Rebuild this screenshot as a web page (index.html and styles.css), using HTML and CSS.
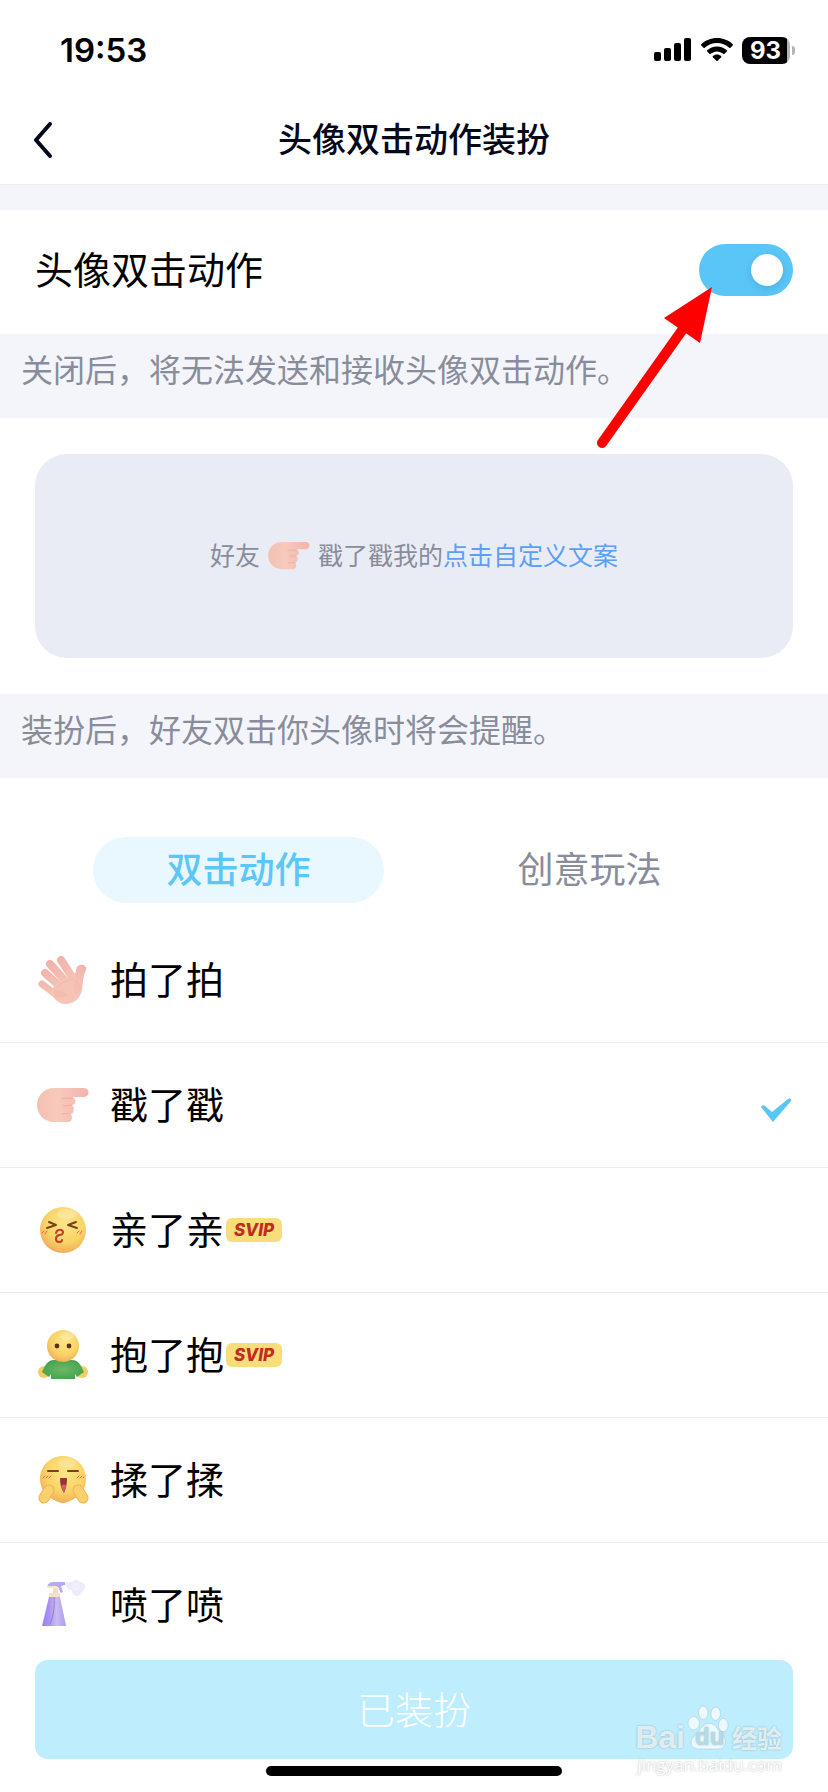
FILE: index.html
```html
<!DOCTYPE html>
<html lang="zh-CN">
    <head>
        <meta charset="utf-8">
        <meta name="viewport" content="width=device-width, initial-scale=1">
        <title>头像双击动作装扮</title>
        <link rel="stylesheet" href="styles.css">
    </head>
    <body>

<div class="statusbar">
  <span class="time">19:53</span>
  <div class="status-icons">
    <svg width="38" height="24" viewBox="0 0 38 24">
      <rect x="0" y="14" width="7" height="9" rx="2"/>
      <rect x="10" y="10" width="7" height="13" rx="2"/>
      <rect x="20" y="5" width="7" height="18" rx="2"/>
      <rect x="30" y="0" width="7" height="23" rx="2"/>
    </svg>
    <svg width="32" height="24" viewBox="0 0 32 24">
      <path d="M16 0C9.900 0 4.300 2.300.300 6.200c-.4.400-.4.900 0 1.300l2.200 2.200c.4.400.9.400 1.300 0C7 6.700 11.300 4.900 16 4.900s9 1.800 12.200 4.800c.4.400.9.400 1.300 0l2.200-2.200c.4-.4.400-.9 0-1.300C27.700 2.300 22.100 0 16 0z"/>
      <path d="M16 8.500c-3.800 0-7.200 1.400-9.800 3.800-.4.400-.4.900 0 1.300l2.200 2.200c.4.400.9.400 1.300 0 1.700-1.500 3.900-2.400 6.300-2.400s4.600.9 6.300 2.400c.4.400.9.400 1.300 0l2.200-2.200c.4-.4.400-.9 0-1.300-2.600-2.400-6-3.800-9.800-3.800z"/>
      <path d="M16 16.500c-1.600 0-3 .6-4.100 1.500-.4.400-.4.900 0 1.300l3.500 3.500c.3.300.8.300 1.200 0l3.500-3.500c.4-.4.400-.9 0-1.300-1.100-.9-2.500-1.500-4.100-1.500z"/>
    </svg>
    <span class="battery">93</span>
  </div>
</div>

<header class="navbar">
  <button class="back" aria-label="返回">
    <svg width="20" height="36" viewBox="0 0 20 36"><path d="M18 2 4 18l14 16" fill="none" stroke="#03081a" stroke-width="4" stroke-linecap="round" stroke-linejoin="round"/></svg>
  </button>
  <h1>头像双击动作装扮</h1>
</header>

<main>
  <div class="setting">
    <label for="double-tap">头像双击动作</label>
    <input type="checkbox" id="double-tap" class="switch" checked>
    <svg class="arrow" width="120" height="166" viewBox="0 0 120 166">
      <path d="M6 156 87 42" stroke="#f00" stroke-width="10" stroke-linecap="round"/>
      <path d="M116 0 68 31l36 25z" fill="#f00"/>
    </svg>
  </div>
  <p class="hint">关闭后，将无法发送和接收头像双击动作。</p>

  <div class="preview">
    <p class="card">
      <span>好友</span>
      <svg width="42" height="28" viewBox="0 0 52 35"><use href="#poke"/></svg>
      <span>戳了戳我的<a href="#">点击自定义文案</a></span>
    </p>
  </div>
  <p class="hint">装扮后，好友双击你头像时将会提醒。</p>

  <div class="tabs">
    <button class="tab active">双击动作</button>
    <button class="tab">创意玩法</button>
  </div>

  <ul class="actions">
    <li>
      <svg class="icon" viewBox="0 -1 52 52">
        <g stroke="url(#finger)" stroke-linecap="round" fill="none">
          <path d="M5 29 22 42" stroke-width="7"/>
          <path d="M8 18 26 34" stroke-width="8"/>
          <path d="M13 9 31 29" stroke-width="8"/>
          <path d="M24 5 37 25" stroke-width="8"/>
        </g>
        <path d="M14 38C15 31 24 24 35 23c4-3 3-7 5-11 4-5 11-1 9 3-3 6-3 12-4 20-2 9-9 14-16 14-8 0-12-5-15-11z" fill="url(#palm)"/>
        <path d="M39 24c-3 6-3 11 0 15 3-1 5-4 5-8" fill="#efaaa0" opacity=".2"/>
        <path d="M17 36c4-2 10-1 13 4-4 3-10 4-13 1z" fill="#efa398" opacity=".25"/>
        <path d="M20 33c4-5 10-8 16-9" fill="none" stroke="#efaaa0" stroke-width="1" opacity=".6"/>
      </svg>
      <span>拍了拍</span>
    </li>
    <li>
      <svg class="icon" viewBox="0 -9 52 52"><use href="#poke"/></svg>
      <span>戳了戳</span>
      <svg class="check" width="32" height="24" viewBox="0 0 32 24"><path d="M1 9c1-2 2-2 4-1l7 6L28 1c2-1 4 0 3 2L13 24z" fill="#58c6f8"/></svg>
    </li>
    <li>
      <svg class="icon" viewBox="0 0 52 52">
        <circle cx="26" cy="26" r="23" fill="url(#face)"/>
        <ellipse cx="30" cy="10" rx="10" ry="5" fill="#fff" opacity=".25"/>
        <path d="M12 18l7 3-9 3M39 18l-8 3 9 3" fill="none" stroke="#77431c" stroke-width="2" stroke-linecap="round" stroke-linejoin="round"/>
        <path d="M19 29c1-4 6-4 7-1 0 2-2 3-4 3-4 1-4 7 0 7 2 0 3-1 3-2" fill="none" stroke="#bd3d28" stroke-width="2" stroke-linecap="round"/>
        <path d="M5 29l2-2M8 30l2-3M40 29l2-2M43 30l2-3" stroke="#ef6252" stroke-width="1" stroke-linecap="round"/>
      </svg>
      <span>亲了亲</span><em class="svip">SVIP</em>
    </li>
    <li>
      <svg class="icon" viewBox="0 0 52 52">
        <circle cx="7" cy="43" r="6" fill="#f7cb68"/>
        <circle cx="45" cy="43" r="6" fill="#f7cb68"/>
        <path d="M17 31h18c7 0 9 6 12 12l-7 5-2-3v5H14v-5l-2 3-7-5c3-6 5-12 12-12z" fill="url(#shirt)"/>
        <circle cx="26" cy="17" r="16" fill="url(#face)"/>
        <ellipse cx="30" cy="7" rx="7" ry="4" fill="#fff" opacity=".25"/>
        <circle cx="20" cy="17" r="2.400" fill="#5d3214"/>
        <circle cx="32" cy="17" r="2.400" fill="#5d3214"/>
      </svg>
      <span>抱了抱</span><em class="svip">SVIP</em>
    </li>
    <li>
      <svg class="icon" viewBox="0 0 52 52">
        <path d="M26 2c13 0 23 10 23 23 0 9-5 17-14 21-4 2-7 3-9 3s-5-1-9-3C8 42 3 34 3 25 3 12 13 2 26 2z" fill="url(#face)"/>
        <ellipse cx="30" cy="9" rx="9" ry="5" fill="#fff" opacity=".2"/>
        <path d="M11 17h10M31 17h10" stroke="#77431c" stroke-width="2" stroke-linecap="round"/>
        <path d="M23 24h7c0 6-1 11-3 15-3-4-4-9-4-15z" fill="#98323d"/>
        <path d="M24 32c2-2 4-2 5 0l-2 7z" fill="#d9606a"/>
        <path d="M6 24l2-2M9 24l2-2M12 24l2-2M40 24l2-2M43 24l2-2M46 24l1-1" stroke="#ef6252" stroke-width="1" stroke-linecap="round"/>
        <path d="M12 36 7 44M41 36l5 8" stroke="#f0b24f" stroke-width="11" stroke-linecap="round"/>
        <path d="M12 36 7 44M41 36l5 8" stroke="#fad06d" stroke-width="9" stroke-linecap="round"/>
      </svg>
      <span>揉了揉</span>
    </li>
    <li>
      <svg class="icon" viewBox="0 0 52 52">
        <g fill="#eceafb">
          <circle cx="30" cy="5" r="2"/><circle cx="34" cy="7" r="4"/><circle cx="39" cy="5" r="4"/>
          <circle cx="43" cy="8" r="5"/><circle cx="40" cy="12" r="5"/>
        </g>
        <circle cx="39" cy="8" r="4" fill="#f5f0f8"/>
        <path d="M16 9h5v5h-5z" fill="#f5dac5"/>
        <path d="M10 8c1-4 4-5 7-5h11v3l-4 1 2 6-2 1-3-6z" fill="#b7a8f2"/>
        <path d="M10 7h10v2H10z" fill="#f8e5d4"/>
        <path d="M12 14h11v4H12z" fill="#f8dfcb"/>
        <path d="M12 18h11l6 29H5z" fill="url(#bottle)"/>
        <path d="M17 18c1 10-1 20-4 27" fill="none" stroke="#a17ac8" stroke-width="1"/>
      </svg>
      <span>喷了喷</span>
    </li>
  </ul>
</main>

<footer>
  <button class="apply" disabled>已装扮</button>
  <div class="home-indicator"></div>
  <div class="watermark">
    <div class="brand">
      <span>Bai</span>
      <span class="paw">
        <svg width="43" height="48" viewBox="0 0 45 48" fill="#fff" fill-opacity=".7" stroke="#a3c9d6" stroke-opacity=".6">
          <ellipse cx="7" cy="19" rx="6" ry="7"/>
          <ellipse cx="17" cy="8" rx="5" ry="7"/>
          <ellipse cx="30" cy="9" rx="5" ry="7"/>
          <ellipse cx="38" cy="21" rx="5" ry="7"/>
          <path d="M23 19c7 0 9 7 13 11 8 8 4 16-4 16H13C4 46 1 38 9 31c5-4 7-12 14-12z"/>
        </svg>
        <b>du</b>
      </span>
      <span class="cn">经验</span>
    </div>
    <div class="site">jingyan.baidu.com</div>
  </div>
</footer>

<svg class="defs" width="0" height="0">
  <defs>
    <linearGradient id="finger" gradientUnits="userSpaceOnUse" x1="8" y1="6" x2="34" y2="40">
      <stop offset="0" stop-color="#f1b0a8"/><stop offset="1" stop-color="#f6cabc"/>
    </linearGradient>
    <linearGradient id="palm" x1="1" y1="0" x2="0" y2="1">
      <stop offset="0" stop-color="#f0b0a8"/><stop offset=".4" stop-color="#f5c3b8"/><stop offset="1" stop-color="#f5c5b6"/>
    </linearGradient>
    <linearGradient id="poke-fill" x1="0" y1="0" x2="1" y2="0">
      <stop offset="0" stop-color="#f5bfb0"/><stop offset=".4" stop-color="#f7cabd"/><stop offset="1" stop-color="#f3b4ab"/>
    </linearGradient>
    <radialGradient id="face" cx=".55" cy=".35" r=".7">
      <stop offset="0" stop-color="#fbe58a"/><stop offset=".6" stop-color="#f9d467"/><stop offset=".85" stop-color="#f5b75c"/><stop offset="1" stop-color="#ef9a4e"/>
    </radialGradient>
    <radialGradient id="shirt">
      <stop offset="0" stop-color="#69ba65"/><stop offset="1" stop-color="#49a450"/>
    </radialGradient>
    <linearGradient id="bottle" x1="0" y1="0" x2="1" y2="0">
      <stop offset="0" stop-color="#9a80f2"/><stop offset=".3" stop-color="#a892f2"/><stop offset=".6" stop-color="#c9bcf0"/><stop offset="1" stop-color="#b09aee"/>
    </linearGradient>
    <g id="poke">
      <path d="M17 0h30c6 0 6 9 0 9H35c5 2 4 8 0 8 3 3 2 8-1 9 2 3 1 8-3 8H17C7 34 0 26 0 17S7 0 17 0z" fill="url(#poke-fill)"/>
      <path d="M24 11c4-2 9 0 12-1M26 18c3-1 6 0 9-1M25 26c3-1 6 0 8 0" fill="none" stroke="#ee9f94" stroke-width="1" opacity=".7"/>
    </g>
  </defs>
</svg>

    </body>
</html>
```
FILE: styles.css
```css
* {
  box-sizing: border-box;
}

html, body {
  height: 100%;
}

body {
  background: #fff;
  color: #000;
  display: flex;
  flex-direction: column;
  font: 38px/1 Inter, "Noto Sans CJK SC", sans-serif;
  margin: 0;
}

h1, p, ul {
  margin: 0;
  padding: 0;
}

button {
  background: none;
  border: 0;
  color: inherit;
  cursor: pointer;
  font: inherit;
  padding: 0;
}

a {
  color: #5b9ff8;
  text-decoration: none;
}

svg {
  display: block;
  flex: none;
}

.defs {
  position: absolute;
}

.statusbar {
  align-items: center;
  display: flex;
  flex: none;
  justify-content: space-between;
  height: 100px;
  padding: 0 33px 0 60px;
}

.time {
  font-size: 33px;
  font-weight: 600;
}

.status-icons {
  align-items: center;
  display: flex;
  gap: 9px;
}

.battery {
  background: linear-gradient(90deg, #000 45px, #b5b5b5 45px);
  border-radius: 8px;
  color: #fff;
  font-size: 24px;
  font-weight: 700;
  line-height: 27px;
  margin-right: 5px;
  padding-left: 8px;
  position: relative;
  width: 48px;
  height: 27px;
}

  .battery::after {
    background: #b5b5b5;
    border-radius: 0 4px 4px 0;
    content: "";
    position: absolute;
      top: 9px;
      right: -5px;
    width: 3px;
    height: 9px;
  }

.navbar {
  align-items: center;
  border-bottom: 1px solid #ececf0;
  display: grid;
  flex: none;
  grid-template-columns: 60px 1fr 60px;
  height: 85px;
  padding: 0 32px 4px;
}

  .navbar h1 {
    color: #03081a;
    font-size: 34px;
    font-weight: 500;
    text-align: center;
  }

main {
  flex: 1;
  min-height: 0;
  overflow-y: auto;
  scrollbar-width: none;
}

.setting {
  align-items: center;
  border-top: 25px solid #f4f5fa;
  display: flex;
  justify-content: space-between;
  height: 149px;
  padding: 0 35px 4px;
  position: relative;
}

.switch {
  appearance: none;
  background: #d5d7de;
  border-radius: 26px;
  cursor: pointer;
  margin: 0;
  padding: 10px;
  width: 94px;
  height: 52px;
}

  .switch::before {
    background: #fff;
    border-radius: 50%;
    box-shadow: 0 3px 8px rgba(0, 60, 110, 0.15);
    content: "";
    display: block;
    width: 32px;
    height: 32px;
  }

  .switch:checked {
    background: #5ac6f7;
  }

  .switch:checked::before {
    margin-left: auto;
  }

.arrow {
  pointer-events: none;
  position: absolute;
    top: 77px;
    right: 112px;
  z-index: 1;
}

.hint {
  background: #f4f5fa;
  color: #898c9b;
  font-size: 32px;
  line-height: 40px;
  padding: 17px 21px 27px;
}

.preview {
  padding: 36px 35px;
}

.card {
  align-items: center;
  background: #e9ecf5;
  border-radius: 32px;
  color: #898c9b;
  display: flex;
  font-size: 25px;
  gap: 8px;
  justify-content: center;
  height: 204px;
}

.tabs {
  display: grid;
  gap: 60px;
  grid-template-columns: 1fr 1fr;
  padding: 59px 93px 15px;
}

.tab {
  border-radius: 33px;
  color: #898c9b;
  font-size: 36px;
  height: 66px;
}

  .tab.active {
    background: #e8f8fe;
    color: #5bc7f8;
    font-weight: 500;
  }

.actions {
  list-style: none;
}

  .actions li {
    align-items: center;
    border-bottom: 1px solid #ebebf2;
    display: flex;
    height: 125px;
    padding: 0 36px 0 37px;
  }

.icon {
  margin-right: 21px;
  width: 52px;
  height: 52px;
}

.check {
  margin: 9px 0 0 auto;
}

.svip {
  background: #f8de7b;
  border-radius: 6px;
  color: #c12b20;
  font: italic 800 17px/24px Inter, sans-serif;
  margin-left: 2px;
  text-align: center;
  width: 56px;
  height: 24px;
}

footer {
  flex: none;
  padding: 0 35px 16px;
  position: relative;
}

.apply {
  background: #beedfd;
  border-radius: 13px;
  color: #fff;
  display: block;
  font-weight: 300;
  height: 99px;
  width: 100%;
}

.home-indicator {
  background: #000;
  border-radius: 5px;
  margin: 7px auto 0;
  width: 296px;
  height: 10px;
}

.watermark {
  color: rgba(255, 255, 255, 0.75);
  pointer-events: none;
  position: absolute;
    right: 46px;
    bottom: 16px;
  text-shadow: 0 0 2px rgba(90, 130, 150, 0.6);
}

.brand {
  align-items: flex-end;
  display: flex;
  font: 700 32px/30px "Liberation Sans", sans-serif;
  gap: 2px;
  margin-bottom: 2px;
}

.paw {
  position: relative;
}

  .paw b {
    color: #b5dbe8;
    font-size: 24px;
    position: absolute;
      left: 8px;
      bottom: 0;
  }

.cn {
  font: 700 25px/30px "Noto Sans CJK SC", sans-serif;
}

.site {
  color: #fff;
  font: 17px/22px "Open Sans", sans-serif;
  text-align: right;
  text-shadow: 0 0 2px rgba(90, 100, 110, 0.5);
}
```
